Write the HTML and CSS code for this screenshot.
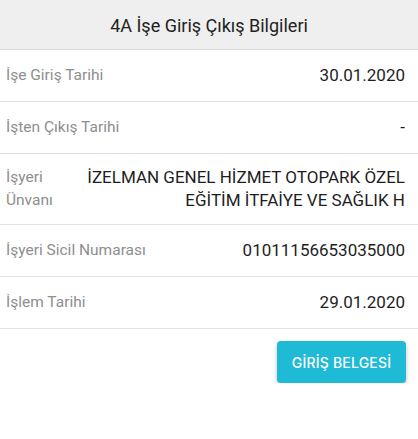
FILE: index.html
```html
<!DOCTYPE html>
<html lang="tr">
<head>
<meta charset="utf-8">
<link rel="stylesheet" href="styles.css">
</head>
<body>
<div class="page">
  <header class="header">4A İşe Giriş Çıkış Bilgileri</header>
  <div class="row">
    <div class="label">İşe Giriş Tarihi</div>
    <div class="value">30.01.2020</div>
  </div>
  <div class="row">
    <div class="label">İşten Çıkış Tarihi</div>
    <div class="value">-</div>
  </div>
  <div class="row">
    <div class="label">İşyeri Ünvanı</div>
    <div class="value">İZELMAN GENEL HİZMET OTOPARK ÖZEL EĞİTİM İTFAİYE VE SAĞLIK H</div>
  </div>
  <div class="row">
    <div class="label">İşyeri Sicil Numarası</div>
    <div class="value">01011156653035000</div>
  </div>
  <div class="row">
    <div class="label">İşlem Tarihi</div>
    <div class="value">29.01.2020</div>
  </div>
  <div class="actions">
    <button class="btn">GİRİŞ BELGESİ</button>
  </div>
</div>
</body>
</html>
```
FILE: styles.css
```css
* { box-sizing: border-box; }
html, body { margin: 0; padding: 0; background: #fff; }
body { font-family: Roboto, "Noto Sans", sans-serif; }
.page { width: 418px; }
.header {
  height: 50px;
  background: #efefef;
  border-bottom: 1px solid #dcdcdc;
  display: flex;
  align-items: center;
  justify-content: center;
  font-size: 18px;
  color: #222;
  padding-top: 1px;
}
.row {
  display: flex;
  align-items: center;
  min-height: 52px;
  padding: 12px 13px 12px 6px;
  border-bottom: 1px solid #e2e2e2;
  line-height: 23px;
}
.label {
  flex: 0 1 auto;
  font-size: 15.5px;
  color: #8e8e8e;
}
.value {
  flex: 0 1 auto;
  margin-left: auto;
  padding-left: 30px;
  max-width: 350px;
  text-align: right;
  font-size: 17px;
  color: #1e1e1e;
}
.actions {
  display: flex;
  justify-content: flex-end;
  padding: 12px 12px 0 0;
}
.btn {
  width: 129px;
  height: 42px;
  border: none;
  border-radius: 4px;
  background: #1fbad6;
  color: #fff;
  font-family: Inter, Roboto, sans-serif;
  font-size: 14px;
  font-weight: 500;
  letter-spacing: 0.2px;
  box-shadow: 0 2px 4px rgba(0,0,0,0.25);
}
```
